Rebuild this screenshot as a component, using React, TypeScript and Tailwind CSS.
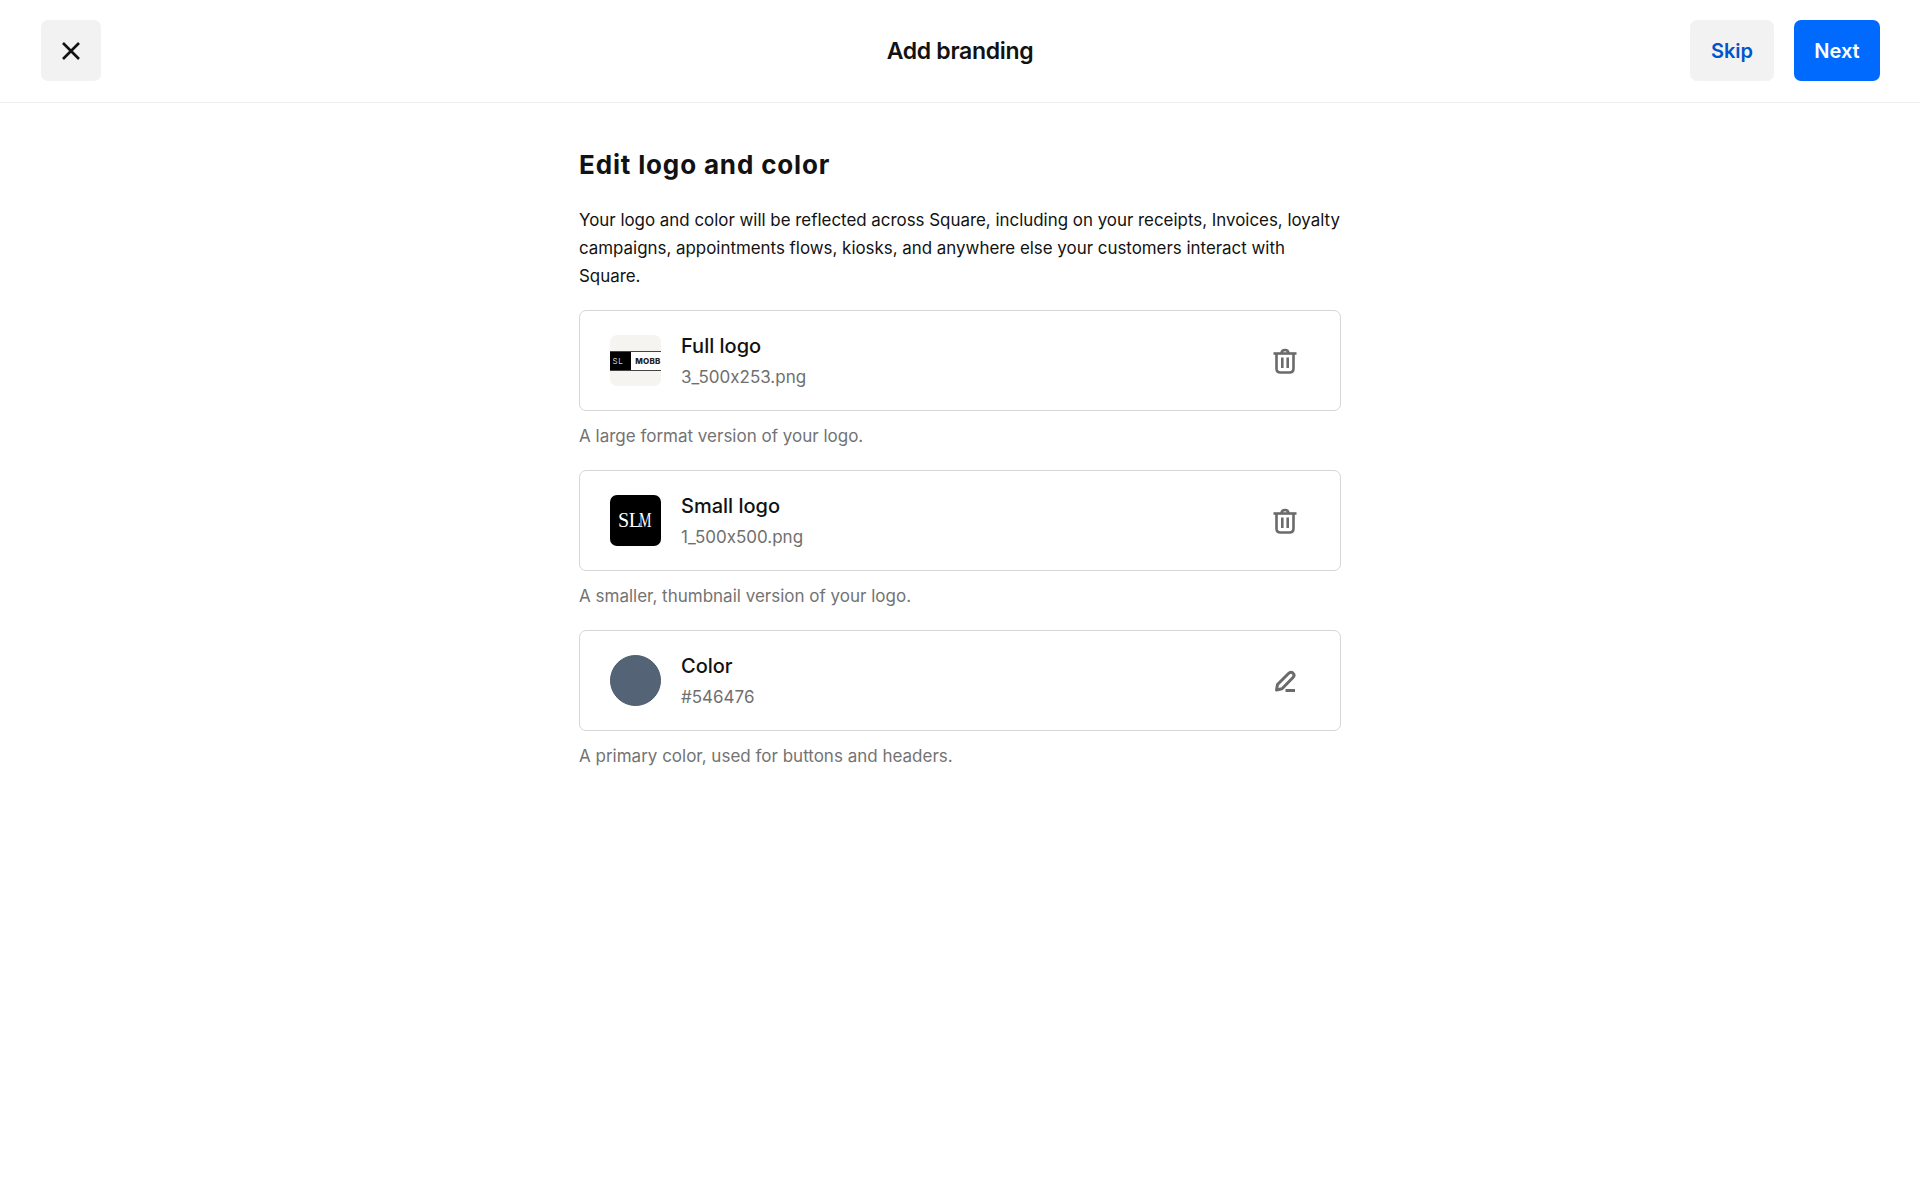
export default function App() {
  return (
    <div className="min-h-[1200px] bg-white text-[#121212] [font-variant-ligatures:no-contextual]" style={{ fontFamily: "Inter, sans-serif" }}>
      <header className="grid h-[103px] grid-cols-[1fr_auto_1fr] items-center border-b border-[#eeeeee] pl-[41px] pr-10 pb-px">
        <button className="flex h-[61px] w-[60px] items-center justify-center justify-self-start rounded-[7px] bg-[#f2f2f2]">
          <svg width="20" height="20" viewBox="0 0 20 20" fill="none" stroke="#121212" strokeWidth="2.6">
            <path d="M2 2 L18 18 M18 2 L2 18" />
          </svg>
        </button>
        <h1 className="-ml-px pt-[2px] text-[23px] font-semibold tracking-[-0.3px]">Add branding</h1>
        <div className="flex gap-5 justify-self-end">
          <button className="flex h-[61px] w-[84px] items-center justify-center rounded-[7px] bg-[#f2f2f2] pt-px text-[20px] font-semibold text-[#0055cc]">Skip</button>
          <button className="flex h-[61px] w-[86px] items-center justify-center rounded-[7px] bg-[#006aff] pt-px text-[20px] font-semibold text-white">Next</button>
        </div>
      </header>
      <main className="mx-auto w-[762px] pt-[44px]">
        <h2 className="text-[26px] font-bold leading-[36px] tracking-[0.85px]">Edit logo and color</h2>
        <p className="mt-[23px] text-[16.9px] leading-[28px]">
          Your logo and color will be reflected across Square, including on your receipts, Invoices, loyalty campaigns, appointments flows, kiosks, and anywhere else your customers interact with Square.
        </p>
        <Row
          className="mt-[20px]"
          title="Full logo"
          sub="3_500x253.png"
          help="A large format version of your logo."
          thumb={<FullThumb />}
          icon={<Trash />}
        />
        <Row
          title="Small logo"
          sub="1_500x500.png"
          help="A smaller, thumbnail version of your logo."
          thumb={<SmallThumb />}
          icon={<Trash />}
        />
        <Row
          title="Color"
          sub="#546476"
          help="A primary color, used for buttons and headers."
          thumb={<div className="h-[51px] w-[51px] rounded-full border border-[#4a5a6b] bg-[#546476]" />}
          icon={<Pencil />}
        />
      </main>
    </div>
  );
}

function Row({ title, sub, help, thumb, icon, className = "" }: { title: string; sub: string; help: string; thumb: React.ReactNode; icon: React.ReactNode; className?: string }) {
  return (
    <section className={`h-[160px] ${className}`}>
      <div className="flex h-[101px] items-center rounded-[7px] border-[1.5px] border-[#d6d6d6] pl-[29.5px] pr-[43px]">
        {thumb}
        <div className="ml-[20.5px] flex-1 pt-px">
          <div className="text-[20px] font-medium leading-[30px]">{title}</div>
          <div className="mt-[2px] text-[17px] leading-[28px] text-[#6f6f6f]">{sub}</div>
        </div>
        {icon}
      </div>
      <p className="mt-[11px] text-[17px] leading-[28px] text-[#737373]">{help}</p>
    </section>
  );
}

function FullThumb() {
  return (
    <div className="flex h-[51px] w-[51px] flex-col justify-center overflow-hidden rounded-[7px] bg-[#f5f4f0]">
      <div className="flex h-[20px] border-y border-[#444444] bg-white">
        <div className="flex w-[24px] items-center bg-black pl-[3px] text-[8px] leading-none tracking-[0.5px] text-[#cfcfcf]">SL</div>
        <div className="flex flex-1 items-center whitespace-nowrap pl-[4px] text-[8px] font-extrabold leading-none tracking-[0.2px] text-[#222222]">MOBB</div>
      </div>
    </div>
  );
}

function SmallThumb() {
  return (
    <div className="flex h-[51px] w-[51px] items-center justify-center rounded-[7px] bg-black pb-[2px] text-[20px] leading-none text-white" style={{ fontFamily: "'Liberation Serif', serif" }}>
      <span className="tracking-[-0.5px]">S</span>
      <span className="tracking-[-2px]">L</span>
      <span className="inline-block w-[13px] origin-left scale-x-[0.7]">M</span>
    </div>
  );
}

function Trash() {
  return (
    <svg width="24" height="26" viewBox="0 0 24 26" fill="none" stroke="#6b6b6b" strokeWidth="2.6">
      <path d="M0.5 5.5 H23.5" />
      <path d="M8.5 5.5 C8.5 0.8 15.5 0.8 15.5 5.5" />
      <path d="M3.5 5.5 V20.5 C3.5 23 5 24.5 7.5 24.5 H16.5 C19 24.5 20.5 23 20.5 20.5 V5.5" />
      <path d="M9.3 9.5 V20 M14.7 9.5 V20" />
    </svg>
  );
}

function Pencil() {
  return (
    <svg width="24" height="24" viewBox="0 0 24 24" fill="none" stroke="#6b6b6b" strokeWidth="3" strokeLinejoin="round">
      <path d="M3.5 21 L4.5 15.5 L15.5 4.5 C17 3 18.7 3 20 4.2 C21.3 5.5 21.3 7.2 20 8.5 L9 19.8 Z" />
      <path d="M12.5 21.5 H22" />
    </svg>
  );
}
